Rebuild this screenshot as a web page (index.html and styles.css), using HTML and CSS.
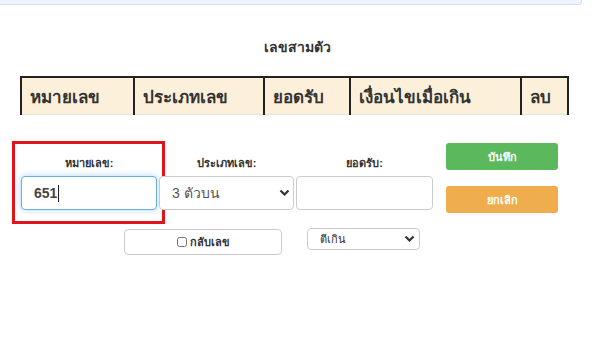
FILE: index.html
```html
<!DOCTYPE html>
<html lang="th">
<head>
    <meta charset="UTF-8">
    <title>เลขสามตัว</title>
    <link rel="stylesheet" href="styles.css">
</head>
<body>
    <div class="topbar"></div>
    <h4 class="title">เลขสามตัว</h4>
    <table class="numTable">
        <tr>
            <th class="colNum">หมายเลข</th>
            <th class="colType">ประเภทเลข</th>
            <th class="colAmount">ยอดรับ</th>
            <th class="colCond">เงื่อนไขเมื่อเกิน</th>
            <th class="colDel">ลบ</th>
        </tr>
    </table>
    <form class="entry" name="addNumber">
        <div class="entryGrid">
            <div class="field mark">
                <label for="num">หมายเลข:</label>
                <input type="text" id="num" class="box numInput focused" value="651">
                <span class="caret"></span>
            </div>
            <div class="field">
                <label for="type">ประเภทเลข:</label>
                <div class="selectWrap">
                    <select id="type" class="box">
                        <option>3 ตัวบน</option>
                        <option>3 ตัวโต๊ด</option>
                    </select>
                    <svg class="chevron" width="11" height="8" viewBox="0 0 11 8"><path d="M1.5 1.5 L5.5 5.5 L9.5 1.5" fill="none" stroke="#333" stroke-width="2.2"/></svg>
                </div>
            </div>
            <div class="field">
                <label for="amount">ยอดรับ:</label>
                <input type="text" id="amount" class="box">
            </div>
            <div class="actions">
                <button type="submit" class="btn btnSave">บันทึก</button>
                <button type="button" class="btn btnCancel">ยกเลิก</button>
            </div>
        </div>
        <div class="entryRow2">
            <label class="reverse"><input type="checkbox" class="check"> กลับเลข</label>
            <div class="selectWrap small">
                <select class="boxSmall">
                    <option>ตีเกิน</option>
                    <option>ไม่รับ</option>
                </select>
                <svg class="chevron" width="11" height="8" viewBox="0 0 11 8"><path d="M1.5 1.5 L5.5 5.5 L9.5 1.5" fill="none" stroke="#333" stroke-width="2.2"/></svg>
            </div>
        </div>
    </form>
</body>
</html>
```
FILE: styles.css
```css
body{
    margin: 0;
    background: #fff;
    color: #333;
    font-family: Tahoma, "Liberation Sans", sans-serif;
}
.topbar{
    width: 581px;
    height: 4px;
    background-color: #eef5fc;
    border-right: 1px solid #d3e0ec;
    border-bottom: 1px solid #d3e0ec;
    border-bottom-right-radius: 4px;
}
.title{
    margin: 33px 0 0;
    text-align: center;
    font-size: 14px;
    line-height: 18px;
    font-weight: bold;
}
.numTable{
    margin: 20px 0 0 20px;
    width: 549px;
    border-collapse: collapse;
    background-color: #fdf0da;
}
.numTable th{
    height: 36px;
    padding: 0 0 0 8px;
    text-align: left;
    font-size: 17px;
    font-weight: bold;
    color: #333;
    border-left: 2px solid #222;
    border-top: 2px solid #222;
    border-bottom: 1px solid #e2e2e2;
}
.numTable th:last-child{
    border-right: 2px solid #222;
}
.colNum{ width: 103px; }
.colType{ width: 120px; }
.colAmount{ width: 76px; }
.colCond{ width: 161px; }
.entry{
    margin-top: 28px;
}
.entryGrid{
    display: grid;
    grid-template-columns: 136px 135px 137px 112px;
    column-gap: 2px;
    margin-left: 21px;
}
.field{
    display: flex;
    flex-direction: column;
    padding-top: 11px;
}
.field label{
    text-align: center;
    font-size: 11px;
    line-height: 18px;
    font-weight: bold;
    color: #333;
    margin-bottom: 4px;
}
.mark{
    position: relative;
}
.mark::after{
    content: "";
    position: absolute;
    left: -9px;
    right: -8px;
    top: -2px;
    bottom: -11px;
    border: 3px solid #e0141b;
    pointer-events: none;
}
.caret{
    position: absolute;
    left: 37px;
    top: 42px;
    width: 1px;
    height: 17px;
    background: #222;
}
.box{
    box-sizing: border-box;
    width: 100%;
    height: 34px;
    margin: 0;
    padding: 0 12px;
    border: 1px solid #ccc;
    border-radius: 4px;
    background: #fff;
    font-family: Tahoma, "Liberation Sans", sans-serif;
    font-size: 14px;
    color: #555;
    outline: none;
}
.numInput{
    font-weight: bold;
    color: #444;
}
.focused{
    border-color: #66afe9;
    box-shadow: 0 0 6px rgba(102,175,233,.5);
}
select.box, .boxSmall{
    -webkit-appearance: none;
    appearance: none;
}
.selectWrap{
    position: relative;
}
.chevron{
    position: absolute;
    right: 4px;
    top: 13px;
    pointer-events: none;
}
.actions{
    display: flex;
    flex-direction: column;
    margin-left: 11px;
    width: 112px;
}
.btn{
    height: 27px;
    border: none;
    border-radius: 3px;
    color: #fff;
    font-family: Tahoma, "Liberation Sans", sans-serif;
    font-size: 11px;
    font-weight: bold;
    padding: 0;
}
.btnSave{
    background-color: #5cb85c;
}
.btnCancel{
    background-color: #f0ad4e;
    margin-top: 16px;
}
.entryRow2{
    display: flex;
    align-items: flex-start;
    margin: 16px 0 0 124px;
}
.reverse{
    box-sizing: border-box;
    width: 158px;
    height: 26px;
    display: flex;
    align-items: center;
    justify-content: center;
    gap: 3px;
    border: 1px solid #ccc;
    border-radius: 4px;
    font-size: 11px;
    font-weight: bold;
}
.check{
    width: 10px;
    height: 10px;
    margin: 0;
}
.small{
    margin-left: 25px;
    margin-top: -1px;
}
.boxSmall{
    box-sizing: border-box;
    width: 113px;
    height: 22px;
    padding: 0 12px;
    border: 1px solid #ccc;
    border-radius: 4px;
    background: #fff;
    font-family: Tahoma, "Liberation Sans", sans-serif;
    font-size: 11px;
    color: #333;
    outline: none;
}
.small .chevron{
    top: 7px;
    right: 5px;
}
```
